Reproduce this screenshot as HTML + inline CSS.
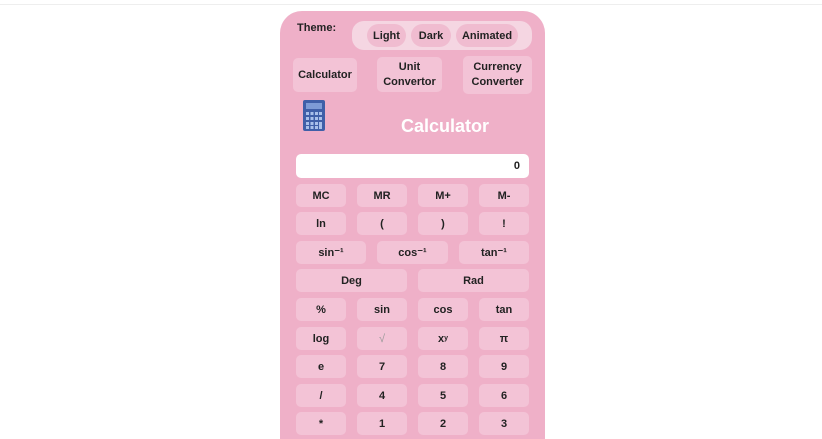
<!DOCTYPE html>
<html style="overflow:hidden;height:439px"><head><style>
body{margin:0;width:822px;height:439px;background:#fff;overflow:hidden;font-family:"Liberation Sans",sans-serif;position:relative}
.topline{position:absolute;left:0;top:4px;width:822px;height:1px;background:#eee}
.card{position:absolute;left:280px;top:11px;width:265px;height:428px;background:#efb0c8;border-radius:22px 22px 0 0}
.a{position:absolute;display:flex;align-items:center;justify-content:center;text-align:center;font-weight:bold;font-size:11px;color:#222;box-sizing:border-box}
.b{background:#f3c3d6;border-radius:5px}
.pill{background:#f0bcd0;border-radius:12px}
</style></head><body>
<div class="topline"></div>
<div class="card"></div>
<div class="a" style="left:297px;top:22px;font-size:11px">Theme:</div>
<div class="a" style="left:352px;top:21px;width:180px;height:29px;background:#f5d6e2;border-radius:12px"></div>
<div class="a pill" style="left:367px;top:24px;width:39px;height:23px">Light</div>
<div class="a pill" style="left:411px;top:24px;width:40px;height:23px">Dark</div>
<div class="a pill" style="left:456px;top:24px;width:62px;height:23px">Animated</div>
<div class="a b" style="left:293px;top:58px;width:64px;height:34px">Calculator</div>
<div class="a b" style="left:377px;top:57px;width:65px;height:35px;line-height:15px">Unit<br>Convertor</div>
<div class="a b" style="left:463px;top:56px;width:69px;height:38px;line-height:15px">Currency<br>Converter</div>
<svg style="position:absolute;left:303px;top:100px" width="22" height="31" viewBox="0 0 22 31">
<rect x="0" y="0" width="22" height="31" rx="2" fill="#3f5fa8"/>
<rect x="3" y="3" width="16" height="6" fill="#7d9bd6"/>
<g fill="#a9c0ea">
<rect x="3" y="12" width="3" height="3"/><rect x="7.5" y="12" width="3" height="3"/><rect x="12" y="12" width="3" height="3"/><rect x="16" y="12" width="3" height="3"/>
<rect x="3" y="17" width="3" height="3"/><rect x="7.5" y="17" width="3" height="3"/><rect x="12" y="17" width="3" height="3"/><rect x="16" y="17" width="3" height="3"/>
<rect x="3" y="22" width="3" height="3"/><rect x="7.5" y="22" width="3" height="3"/><rect x="12" y="22" width="3" height="3"/><rect x="16" y="22" width="3" height="7"/>
<rect x="3" y="26" width="3" height="3"/><rect x="7.5" y="26" width="3" height="3"/><rect x="12" y="26" width="3" height="3"/>
</g></svg>
<div class="a" style="left:380px;top:114px;width:130px;height:24px;color:#fff;font-size:18px">Calculator</div>
<div class="a" style="left:296px;top:154px;width:233px;height:24px;background:#fff;border-radius:5px;justify-content:flex-end;padding-right:9px">0</div>
<div id="g"></div>
<script>
var rows=[["MC","MR","M+","M-"],["ln","(",")","!"],["sin⁻¹","cos⁻¹","tan⁻¹"],["Deg","Rad"],["%","sin","cos","tan"],["log","√","x<sup style='font-size:7px'>y</sup>","π"],["e","7","8","9"],["/","4","5","6"],["*","1","2","3"]];
var ys=[184,212,241,269,298,327,355,384,412];
var cols={4:[[296,50],[357,50],[418,50],[479,50]],3:[[296,70],[377,71],[459,70]],2:[[296,111],[418,111]]};
var h="";
rows.forEach(function(r,i){r.forEach(function(t,j){var c=cols[r.length][j];h+='<div class="a b" style="left:'+c[0]+'px;top:'+ys[i]+'px;width:'+c[1]+'px;height:23px'+(t=="√"?';color:#999;font-weight:normal':'')+'">'+t+'</div>';});});
document.getElementById("g").innerHTML=h;
</script>
</body></html>
